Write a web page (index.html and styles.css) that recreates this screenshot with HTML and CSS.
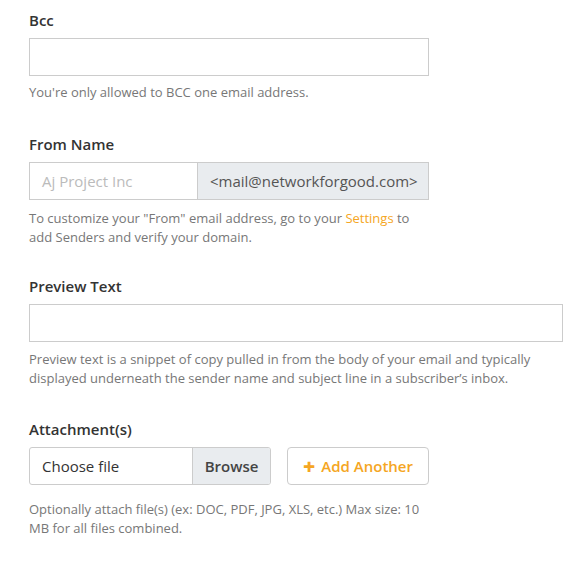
FILE: index.html
```html
<!DOCTYPE html>
<html>
<head>
<meta charset="utf-8">
<link rel="stylesheet" href="styles.css">
</head>
<body>
<div class="form">
  <div class="field bcc-field">
    <div class="label">Bcc</div>
    <div class="input"></div>
    <div class="help">You're only allowed to BCC one email address.</div>
  </div>
  <div class="field from-field">
    <div class="label">From Name</div>
    <div class="group">
      <div class="group-input placeholder">Aj Project Inc</div>
      <div class="addon">&lt;mail@networkforgood.com&gt;</div>
    </div>
    <div class="help from-help">To customize your "From" email address, go to your <span class="link">Settings</span> <span>to</span><br>add Senders and verify your domain.</div>
  </div>
  <div class="field wide-field">
    <div class="label">Preview Text</div>
    <div class="input wide"></div>
    <div class="help preview-help">Preview text is a snippet of copy pulled in from the body of your email and typically displayed underneath the sender name and subject line in a subscriber’s inbox.</div>
  </div>
  <div class="field">
    <div class="label">Attachment(s)</div>
    <div class="attach-row">
      <div class="file">
        <div class="file-name">Choose file</div>
        <div class="browse">Browse</div>
      </div>
      <div class="add-btn"><span class="plus">+</span>Add Another</div>
    </div>
    <div class="help attach-help">Optionally attach file(s) (ex: DOC, PDF, JPG, XLS, etc.) Max size: 10 MB for all files combined.</div>
  </div>
</div>
</body>
</html>
```

FILE: styles.css
```css
html, body {
  margin: 0;
  padding: 0;
  background: #fff;
}
body {
  font-family: "Open Sans", "Liberation Sans", sans-serif;
  color: #333;
}
.form {
  padding: 10px 0 0 29px;
}
.field {
  margin-bottom: 30px;
  width: 400px;
}
.bcc-field {
  margin-bottom: 31px;
}
.from-field {
  margin-bottom: 28px;
}
.wide-field {
  width: 534px;
}
.label {
  font-size: 15px;
  font-weight: 600;
  line-height: 20px;
  color: #333;
  margin-bottom: 8px;
}
.input {
  box-sizing: border-box;
  height: 38px;
  width: 400px;
  border: 1px solid #ccc;
  background: #fff;
}
.input.wide {
  width: 534px;
}
.help {
  font-size: 13px;
  line-height: 19.5px;
  color: #777;
  margin-top: 7px;
}
.from-help {
  margin-top: 9px;
}
.preview-help {
  margin-top: 8px;
}
.attach-help {
  margin-top: 15px;
}
.link {
  color: #f5a623;
}
.group {
  display: flex;
  height: 38px;
  box-sizing: border-box;
  border: 1px solid #ccc;
  width: 400px;
}
.group-input {
  width: 155px;
  padding-left: 12px;
  font-size: 15px;
  line-height: 36px;
  background: #fff;
  border-right: 1px solid #ccc;
}
.placeholder {
  color: #bbb;
}
.addon {
  flex: 1;
  background: #e9ecef;
  color: #555;
  font-size: 15px;
  line-height: 36px;
  padding-left: 12px;
}
.attach-row {
  display: flex;
  gap: 16px;
}
.file {
  display: flex;
  box-sizing: border-box;
  width: 242px;
  height: 38px;
  border: 1px solid #ccc;
  border-radius: 3px;
  overflow: hidden;
}
.file-name {
  flex: 1;
  padding-left: 12px;
  font-size: 15px;
  line-height: 36px;
  color: #333;
}
.browse {
  width: 77px;
  background: #e9ecef;
  border-left: 1px solid #ccc;
  font-size: 15px;
  font-weight: 600;
  line-height: 36px;
  text-align: center;
  color: #444;
}
.add-btn {
  box-sizing: border-box;
  width: 142px;
  height: 38px;
  border: 1px solid #ccc;
  border-radius: 4px;
  display: flex;
  align-items: center;
  justify-content: center;
  color: #f5a623;
  font-size: 15px;
  font-weight: 600;
}
.plus {
  font-size: 21px;
  font-weight: 800;
  margin-right: 6px;
  line-height: 20px;
}
```
